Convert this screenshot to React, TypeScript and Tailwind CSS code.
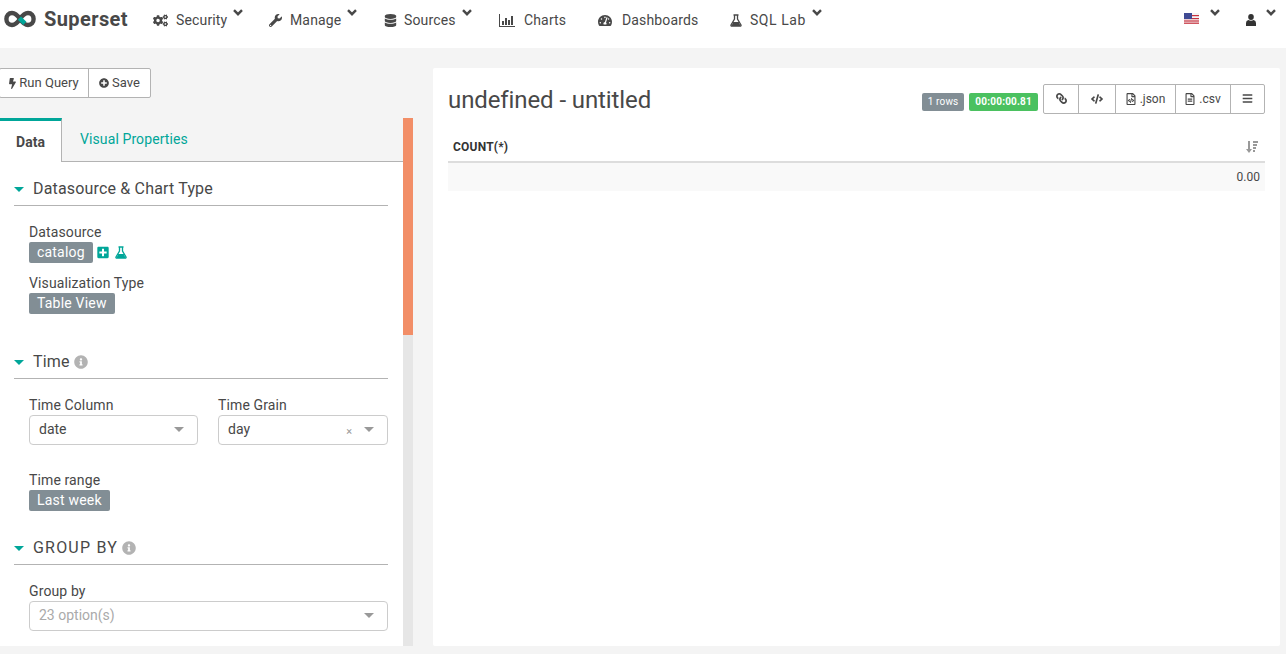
import { ReactNode } from "react";
import { IconType } from "react-icons";
import {
  FaBars,
  FaBolt,
  FaCode,
  FaCogs,
  FaDatabase,
  FaInfoCircle,
  FaLink,
  FaPlusCircle,
  FaPlusSquare,
  FaRegFileAlt,
  FaRegFileCode,
  FaTachometerAlt,
  FaWrench,
} from "react-icons/fa";

function BarChartIcon({ className }: { className?: string }) {
  return (
    <svg viewBox="0 0 16 13" fill="currentColor" className={className}>
      <rect x="0" y="0" width="1" height="13" />
      <rect x="0" y="12" width="16" height="1" />
      <rect x="3" y="7" width="2" height="4" />
      <rect x="6" y="4" width="2" height="7" />
      <rect x="9" y="6" width="2" height="5" />
      <rect x="12" y="2" width="2" height="9" />
    </svg>
  );
}

function FlaskIcon({ className }: { className?: string }) {
  return (
    <svg viewBox="0 0 12 13" className={className}>
      <path
        d="M3.5 1 H8.5 M4.5 1 V5 L1 11 Q0.6 12.2 2 12.2 H10 Q11.4 12.2 11 11 L7.5 5 V1"
        fill="none"
        stroke="currentColor"
        strokeWidth="1.3"
      />
      <path d="M3.2 8 H8.8 L10.6 12 H1.4 Z" fill="currentColor" />
    </svg>
  );
}

type NavItem = {
  label: string;
  Icon: IconType | typeof FlaskIcon;
  iconClass: string;
  itemClass: string;
  labelClass: string;
  caret: boolean;
};

const NAV: NavItem[] = [
  { label: "Security", Icon: FaCogs, iconClass: "w-[15px] h-[13px] mr-[8px]", itemClass: "w-[116px]", labelClass: "tracking-[0.15px]", caret: true },
  { label: "Manage", Icon: FaWrench, iconClass: "w-[13px] h-[13px] mr-[8px]", itemClass: "w-[115px]", labelClass: "tracking-[0.15px]", caret: true },
  { label: "Sources", Icon: FaDatabase, iconClass: "w-[13px] h-[13px] mr-[7px]", itemClass: "w-[115px]", labelClass: "tracking-[0.15px]", caret: true },
  { label: "Charts", Icon: BarChartIcon, iconClass: "w-[16px] h-[13px] mr-[9px]", itemClass: "w-[99px]", labelClass: "tracking-[0.15px]", caret: false },
  { label: "Dashboards", Icon: FaTachometerAlt, iconClass: "w-[14px] h-[13px] mr-[10px]", itemClass: "w-[132px]", labelClass: "tracking-[0.15px]", caret: false },
  { label: "SQL Lab", Icon: FlaskIcon, iconClass: "w-[12px] h-[13px] mr-[8px]", itemClass: "w-[100px]", labelClass: "tracking-[0.55px]", caret: true },
];

function Logo() {
  return (
    <svg viewBox="0 0 32 18" className="w-[32px] h-[18px] ml-[4px] mr-[8px]">
      <path
        d="M16 9 C13 4.5 11 3 8 3 C4.6 3 2.4 5.6 2.4 9 C2.4 12.4 4.6 15 8 15 C11 15 13 13.5 16 9 C19 4.5 21 3 24 3 C27.4 3 29.6 5.6 29.6 9 C29.6 12.4 27.4 15 24 15 C21 15 19 13.5 16 9 Z"
        fill="none"
        stroke="#484848"
        strokeWidth="4.4"
      />
      <path d="M15.4 8.2 L20.8 13.4" fill="none" stroke="#00a699" strokeWidth="4.6" />
    </svg>
  );
}

function Flag() {
  return (
    <svg viewBox="0 0 15 11" className="w-[15px] h-[11px]">
      <rect width="15" height="11" fill="#f4f4f4" />
      <rect y="2" width="15" height="1.2" fill="#c8313e" />
      <rect y="5" width="15" height="1.2" fill="#c8313e" />
      <rect y="7.4" width="15" height="1.2" fill="#c8313e" />
      <rect y="9.6" width="15" height="1.2" fill="#c8313e" />
      <rect width="8" height="6" fill="#3f4a94" />
    </svg>
  );
}

function Caret({ className }: { className: string }) {
  return (
    <svg viewBox="0 0 10 7" className={`w-[10px] h-[7px] text-[#484848] ${className}`}>
      <path d="M1 1.2 L5 5.2 L9 1.2" fill="none" stroke="currentColor" strokeWidth="2.4" />
    </svg>
  );
}

function UserIcon() {
  return (
    <svg viewBox="0 0 10 12" fill="#333" className="mt-[14px] ml-[26px] w-[10px] h-[12px]">
      <ellipse cx="5" cy="3" rx="2.8" ry="3" />
      <path d="M0 12 V9 Q0 6.6 2.4 6 Q5 7.4 7.6 6 Q10 6.6 10 9 V12 Z" />
    </svg>
  );
}

function SortIcon() {
  return (
    <svg viewBox="0 0 12 12" fill="#999" className="w-[12px] h-[12px]">
      <rect x="2" y="0" width="2" height="9" />
      <path d="M0 8 H6 L3 12 Z" />
      <rect x="7" y="0" width="5" height="2" />
      <rect x="7" y="3" width="4" height="2" />
      <rect x="7" y="6" width="3" height="2" />
      <rect x="7" y="9" width="2" height="2" />
    </svg>
  );
}

function TopNav() {
  return (
    <nav className="flex items-start h-[48px] bg-white shrink-0">
      <div className="flex items-center h-[37px] w-[153px]">
        <Logo />
        <span className="font-bold text-[20px] tracking-[0.4px] text-[#484848]">Superset</span>
      </div>
      {NAV.map((n) => (
        <div key={n.label} className={`flex items-start ${n.itemClass}`}>
          <n.Icon className={`mt-[14px] text-[#484848] ${n.iconClass}`} />
          <span className={`mt-[11px] text-[14px] leading-[18px] text-[#484848] ${n.labelClass}`}>{n.label}</span>
          {n.caret && <Caret className="mt-[9px] ml-[6px]" />}
        </div>
      ))}
      <div className="flex items-start ml-auto">
        <div className="mt-[13px]">
          <Flag />
        </div>
        <Caret className="mt-[9px] ml-[11px]" />
        <UserIcon />
        <Caret className="mt-[9px] ml-[10px] mr-[10px]" />
      </div>
    </nav>
  );
}

function SectionTitle({ title, info, wide }: { title: string; info?: boolean; wide?: boolean }) {
  return (
    <div className="flex items-center h-[33px] border-b border-[#b3b3b3]">
      <span className="w-0 h-0 border-x-[5px] border-x-transparent border-t-[5px] border-t-[#00a699] mr-[9px]" />
      <span className={`text-[16px] text-[#484848] leading-[20px] -mt-[1px] ${wide ? "tracking-[1.2px]" : "tracking-[0.17px]"}`}>
        {title}
      </span>
      {info && <FaInfoCircle className="ml-[4px] -mt-[1px] w-[14px] h-[14px] text-[#b3b3b3]" />}
    </div>
  );
}

function Pill({ children }: { children: ReactNode }) {
  return (
    <span className="inline-block h-[21px] px-[8px] bg-[#828e95] rounded-[2px] text-white text-[14px] leading-[20px] tracking-[0.2px]">
      {children}
    </span>
  );
}

function Label({ children }: { children: ReactNode }) {
  return <div className="text-[14px] leading-[17px] tracking-[0.12px] text-[#484848]">{children}</div>;
}

function SelectBox({ value, muted, clear }: { value: string; muted?: boolean; clear?: boolean }) {
  return (
    <div className="flex items-center h-[30px] pl-[9px] pr-[13px] bg-white border border-[#ccc] rounded-[4px]">
      <span className={`flex-1 pb-[2px] text-[14px] ${muted ? "text-[#aaa]" : "text-[#484848]"}`}>{value}</span>
      {clear && <span className="mr-[12px] mt-[3px] text-[11px] leading-none text-[#999]">×</span>}
      <span className="w-0 h-0 border-x-[5px] border-x-transparent border-t-[5px] border-t-[#999] mb-[2px]" />
    </div>
  );
}

function ControlPanel() {
  return (
    <div className="flex h-[528px] mt-[20px]">
      <div className="w-[403px] flex flex-col bg-white overflow-hidden">
        <div className="flex h-[44px] bg-[#f4f4f4] shrink-0">
          <div className="w-[62px] flex items-center justify-center pt-[2px] bg-white border-t-[3px] border-t-[#00a699] border-r border-r-[#b3b3b3] font-bold text-[14px] text-[#484848]">
            Data
          </div>
          <div className="flex-1 pl-[18px] pt-[11px] border-b border-[#b3b3b3] text-[14px] leading-[20px] tracking-[0.1px] text-[#00a699]">
            Visual Properties
          </div>
        </div>
        <div className="pl-[14px] pr-[15px]">
          <div className="pt-[11px]">
            <SectionTitle title="Datasource & Chart Type" />
          </div>
          <div className="pl-[15px] pt-[18px]">
            <Label>Datasource</Label>
            <div className="flex items-center mt-[1px]">
              <Pill>catalog</Pill>
              <FaPlusSquare className="ml-[4px] w-[12px] h-[13px] text-[#00a699]" />
              <FlaskIcon className="ml-[6px] w-[12px] h-[13px] text-[#00a699]" />
            </div>
            <div className="mt-[12px]">
              <Label>Visualization Type</Label>
            </div>
            <div className="flex mt-[1px]">
              <Pill>Table View</Pill>
            </div>
          </div>

          <div className="pt-[32px]">
            <SectionTitle title="Time" info />
          </div>
          <div className="pl-[15px] pt-[18px]">
            <div className="grid grid-cols-[169px_170px] gap-x-[20px]">
              <div>
                <Label>Time Column</Label>
                <div className="mt-[1px]">
                  <SelectBox value="date" />
                </div>
              </div>
              <div>
                <Label>Time Grain</Label>
                <div className="mt-[1px]">
                  <SelectBox value="day" clear />
                </div>
              </div>
            </div>
            <div className="mt-[27px]">
              <Label>Time range</Label>
            </div>
            <div className="flex mt-[1px]">
              <Pill>Last week</Pill>
            </div>
          </div>

          <div className="pt-[21px]">
            <SectionTitle title="GROUP BY" info wide />
          </div>
          <div className="pl-[15px] pt-[18px]">
            <Label>Group by</Label>
            <div className="mt-[1px]">
              <SelectBox value="23 option(s)" muted />
            </div>
          </div>
        </div>
      </div>
      <div className="w-[10px] bg-[#e6e6e6]">
        <div className="h-[217px] bg-[#f28e67]" />
      </div>
    </div>
  );
}

function ToolButton({ children, className }: { children: ReactNode; className: string }) {
  return (
    <div className={`flex items-center justify-center gap-[4px] text-[12px] text-[#484848] ${className}`}>
      {children}
    </div>
  );
}

function ResultPanel() {
  return (
    <div className="w-[847px] h-[578px] bg-white rounded-[2px] px-[15px]">
      <div className="flex items-center h-[64px]">
        <h1 className="text-[24px] leading-[30px] tracking-[-0.1px] text-[#484848] flex-1">undefined - untitled</h1>
        <span className="flex items-center h-[18px] px-[6px] mt-[3px] bg-[#828e95] rounded-[2px] text-[10px] tracking-[0.15px] text-white">
          1 rows
        </span>
        <span className="flex items-center h-[18px] px-[6px] mt-[3px] ml-[5px] bg-[#4bc160] rounded-[2px] text-[10px] font-bold tracking-[0.2px] text-white">
          00:00:00.81
        </span>
        <div className="flex h-[30px] ml-[5px] -mt-[3px] bg-white border border-[#b3b3b3] rounded-[2px]">
          <ToolButton className="w-[35px] border-r border-[#b3b3b3]">
            <FaLink className="w-[11px] h-[11px] -mt-[1px] -scale-x-100" />
          </ToolButton>
          <ToolButton className="w-[37px] border-r border-[#b3b3b3]">
            <FaCode className="w-[12px] h-[10px]" />
          </ToolButton>
          <ToolButton className="w-[60px] border-r border-[#b3b3b3]">
            <FaRegFileCode className="w-[10px] h-[12px]" />
            .json
          </ToolButton>
          <ToolButton className="w-[55px] border-r border-[#b3b3b3]">
            <FaRegFileAlt className="w-[10px] h-[12px]" />
            .csv
          </ToolButton>
          <ToolButton className="w-[33px]">
            <FaBars className="w-[11px] h-[11px]" />
          </ToolButton>
        </div>
      </div>
      <div className="flex items-center justify-between h-[31px] pl-[5px] pr-[7px] border-b-2 border-[#ddd]">
        <span className="pt-[1px] text-[12px] font-bold tracking-[0.2px] text-[#333]">COUNT(*)</span>
        <SortIcon />
      </div>
      <div className="flex items-center justify-end h-[28px] pr-[5px] bg-[#f9f9f9] text-[12px] text-[#484848]">
        0.00
      </div>
    </div>
  );
}

export default function App() {
  return (
    <div className="flex flex-col h-[654px] overflow-hidden bg-[#f4f4f4] font-['Roboto',sans-serif]">
      <TopNav />
      <main className="flex gap-[20px] pt-[20px]">
        <div className="w-[413px]">
          <div className="flex w-[152px] h-[30px] -ml-px bg-white border border-[#b3b3b3] rounded-[2px] text-[13px] text-[#484848]">
            <div className="flex items-center justify-center gap-[3px] w-[89px] border-r border-[#b3b3b3]">
              <FaBolt className="w-[7px] h-[11px]" />
              Run Query
            </div>
            <div className="flex items-center justify-center gap-[3px] flex-1">
              <FaPlusCircle className="w-[10px] h-[10px]" />
              Save
            </div>
          </div>
          <ControlPanel />
        </div>
        <ResultPanel />
      </main>
    </div>
  );
}
